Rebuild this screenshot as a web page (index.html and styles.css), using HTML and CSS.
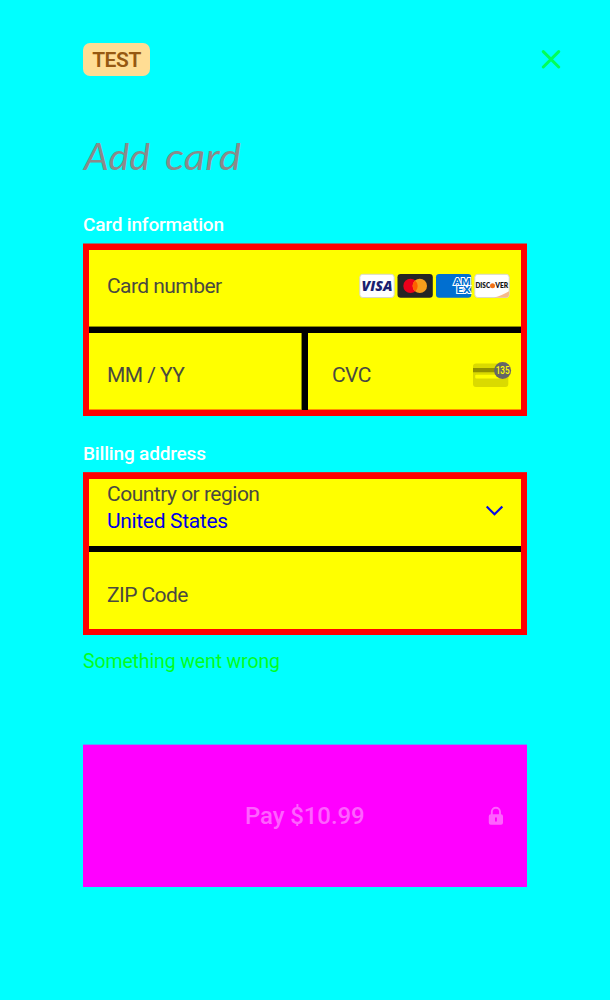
FILE: index.html
```html
<!DOCTYPE html>
<html lang="en">
<head>
<meta charset="utf-8">
<title>Add card</title>
<link rel="stylesheet" href="styles.css">
</head>
<body>
<main class="sheet">
  <header class="topbar">
    <span class="badge">TEST</span>
    <svg class="close" width="20" height="20" viewBox="0 0 20 20" fill="none" stroke="#00ff5a" stroke-width="3" stroke-linecap="round"><path d="M2.3 2.6l15.4 15.4M17.7 2.6L2.3 18"/></svg>
  </header>
  <h1 class="title"><svg width="170" height="50" viewBox="0 0 170 50"><text x="1" y="35" textLength="66" lengthAdjust="spacingAndGlyphs">Add</text><text x="82" y="35" textLength="76" lengthAdjust="spacingAndGlyphs">card</text></svg></h1>

  <h2 class="label">Card information</h2>
  <section class="box card-box">
    <div class="row number-row">
      <span class="hint number">Card number</span>
      <svg class="brands" width="152" height="26" viewBox="0 0 152 26">
        <rect x=".8" y="1.3" width="34.4" height="23.2" rx="3" fill="#fff" stroke="#d8d8c8" stroke-width="1"/>
        <text x="2.5" y="17.7" class="visa" textLength="31" lengthAdjust="spacingAndGlyphs">VISA</text>
        <rect x="38.5" y="1" width="35.3" height="23.8" rx="3.2" fill="#252525"/>
        <circle cx="51.5" cy="12.9" r="7.2" fill="#eb001b"/>
        <circle cx="60.8" cy="12.9" r="7.2" fill="#f79e1b"/>
        <path d="M56.15 7.4a7.2 7.2 0 0 1 0 11a7.2 7.2 0 0 1 0-11z" fill="#ff5f00"/>
        <rect x="77" y="1" width="35.3" height="23.8" rx="3.2" fill="#016fd0"/>
        <text x="94.6" y="12" class="amex" textLength="17.2" lengthAdjust="spacingAndGlyphs">AM</text>
        <text x="97.4" y="20.4" class="amex" textLength="14.2" lengthAdjust="spacingAndGlyphs">EX</text>
        <rect x="115.8" y="1.3" width="34.4" height="23.2" rx="3" fill="#fff" stroke="#d8d8c8" stroke-width="1"/>
        <path d="M150 18.2c-5 3-9.5 5-15 6.2h12.2q2.8 0 2.8-2.8z" fill="#f6b98a"/>
        <text x="116.5" y="15.2" class="disc" textLength="14.6" lengthAdjust="spacingAndGlyphs">DISC</text>
        <circle cx="133.5" cy="12.7" r="2.5" fill="#f47216"/>
        <text x="136.2" y="15.2" class="disc" textLength="13" lengthAdjust="spacingAndGlyphs">VER</text>
      </svg>
    </div>
    <div class="row split">
      <div class="cell expiry"><span class="hint mmyy">MM / YY</span></div>
      <div class="cell cvc-cell">
        <span class="hint cvc">CVC</span>
        <svg class="cvc-icon" width="39" height="27" viewBox="0 0 39 27">
          <rect x="0" y="2.5" width="35.3" height="23.6" rx="3" fill="#dada00"/>
          <path d="M0 7h35.3v4.2H0z" fill="#929200"/>
          <rect x="2.2" y="13.8" width="29" height="3.8" rx="1" fill="#ffff00"/>
          <circle cx="29.6" cy="9.4" r="8.5" fill="#666"/>
          <text x="22.7" y="13" class="digits" textLength="14" lengthAdjust="spacingAndGlyphs">135</text>
        </svg>
      </div>
    </div>
  </section>

  <h2 class="label billing">Billing address</h2>
  <section class="box billing-box">
    <div class="row country-row">
      <div class="country">
        <span class="hint region">Country or region</span>
        <span class="value">United States</span>
      </div>
      <svg class="chevron" width="18" height="12" viewBox="0 0 18 12" fill="none" stroke="#0808e8" stroke-width="2.1"><path d="M1.7 1.6l7.8 7.6 7.8-7.6"/></svg>
    </div>
    <div class="row zip-row"><span class="hint zip">ZIP Code</span></div>
  </section>
  <p class="error">Something went wrong</p>

  <button class="pay" disabled>
    <span class="pay-text">Pay $10.99</span>
    <svg class="lock" width="16" height="20" viewBox="0 0 16 20"><path d="M3.8 9V5.8a4.1 4.1 0 0 1 8.2 0V9" fill="none" stroke="#ff61ff" stroke-width="1.9"/><path fill-rule="evenodd" d="M2.8 8.3H13q2 0 2 2v6.4q0 2-2 2H2.8q-2 0-2-2v-6.4q0-2 2-2zM7 11.5v4h1.9v-4z" fill="#ff61ff"/></svg>
  </button>
</main>
</body>
</html>
```
FILE: styles.css
```css
* { box-sizing: border-box; }
body {
  margin: 0;
  background: #00ffff;
  font-family: Roboto, "Liberation Sans", sans-serif;
}
svg { display: block; flex: none; }
.sheet {
  height: 1000px;
  padding: 43px 83px 0;
  display: flex;
  flex-direction: column;
}
.topbar {
  display: flex;
  justify-content: space-between;
  height: 33px;
  margin-right: -34px;
}
.badge {
  width: 67px;
  border-radius: 7px;
  background: #ffdd94;
  color: #965811;
  font-size: 21px;
  font-weight: 600;
  line-height: 35px;
  text-align: center;
  letter-spacing: -0.45px;
}
.close { margin-top: 6px; }
.title {
  margin: 59px 0 0;
  height: 50px;
  font: italic 400 36px Lato, cursive;
}
.title text { fill: #8a8a8a; }
.title svg { overflow: visible; }
.label {
  margin: 28px 0 0;
  height: 24px;
  font-size: 19px;
  font-weight: 500;
  line-height: 24px;
  letter-spacing: -0.17px;
  color: #fff;
  white-space: nowrap;
}
.box {
  border: 6px solid #f00;
  background: #ff0;
}
.card-box {
  height: 172px;
  margin-top: 7px;
  box-shadow: 0 -1px #808080;
}
.row { display: flex; }
.number-row {
  height: 83px;
  padding-left: 18px;
  padding-right: 10px;
  justify-content: space-between;
  border-bottom: 6px solid #000;
  box-shadow: inset 0 -1px #8f8f00;
}
.hint {
  font-size: 21px;
  line-height: 26px;
  letter-spacing: -0.56px;
  color: #494940;
  white-space: nowrap;
}
.region { letter-spacing: -0.5px; }
.number { margin-top: 23px; }
.brands { margin-top: 23px; }
.split { height: 77px; box-shadow: inset 0 -1px #ff9000; }
.cell { display: flex; padding-top: 29px; }
.expiry {
  width: 219px;
  padding-left: 18px;
  border-right: 6px solid #000;
  box-shadow: inset -1px 0 #8f8f00;
}
.cvc-cell {
  flex: 1;
  padding-left: 24px;
  padding-right: 9px;
  justify-content: space-between;
}
.cvc-icon { margin-top: -1px; }
.billing { margin-top: 26px; }
.billing-box {
  height: 162px;
  margin-top: 7px;
  box-shadow: 0 -1px #d82828;
}
.country-row {
  height: 73px;
  padding: 2px 18px 0;
  justify-content: space-between;
  border-bottom: 6px solid #000;
}
.country { display: flex; flex-direction: column; gap: 1px; }
.value {
  font-size: 21px;
  line-height: 26px;
  letter-spacing: -0.33px;
  color: #0000e6;
  white-space: nowrap;
}
.chevron { margin-top: 24px; }
.zip-row { padding: 30px 18px 0; }
.error {
  margin: 14px 0 0;
  height: 24px;
  font-size: 19.5px;
  line-height: 25px;
  letter-spacing: -0.13px;
  color: #00ff1e;
}
.pay {
  height: 142px;
  margin: 72px 0 0;
  padding: 0 23px 0 0;
  border: 0;
  background: #f0f;
  box-shadow: 0 -1px #5aa5ff;
  display: flex;
  align-items: center;
  justify-content: space-between;
  font-family: inherit;
}
.pay-text {
  padding-left: 162px;
  font-size: 24px;
  font-weight: 500;
  line-height: 28px;
  letter-spacing: -0.1px;
  color: #ff61ff;
  white-space: nowrap;
}
.visa { font: italic 800 13.5px "Open Sans", sans-serif; fill: #1a1f71; }
.amex { font: 700 9.4px Roboto, sans-serif; fill: #016fd0; stroke: #fff; stroke-width: 1.8px; paint-order: stroke; }
.disc { font: 800 6.9px Lato, sans-serif; fill: #151515; }
.digits { font: 500 10px Roboto, sans-serif; fill: #ff0; }
```
